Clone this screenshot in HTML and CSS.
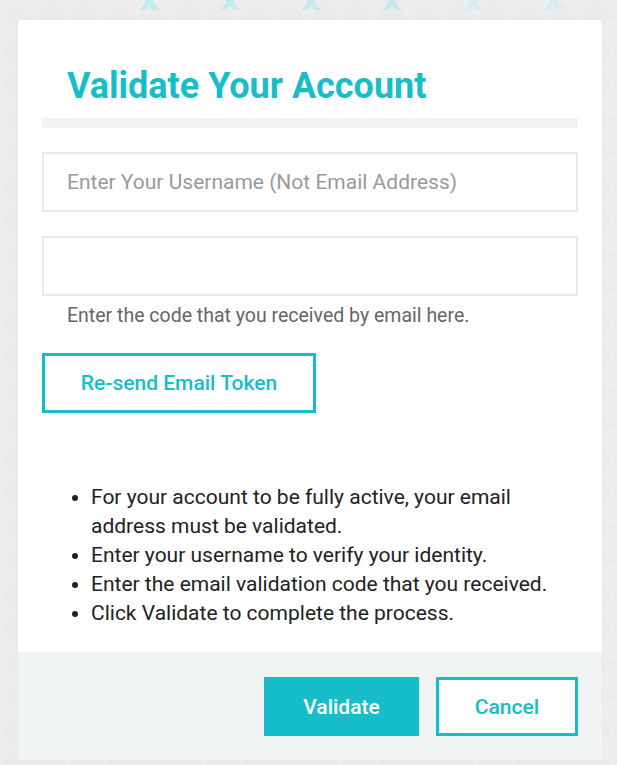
FILE: index.html
```html
<!DOCTYPE html>
<html lang="en">
<head>
<meta charset="utf-8">
<title>Validate Your Account</title>
<link rel="stylesheet" href="styles.css">
</head>
<body>
<div class="deco">
  <svg class="mark" viewBox="0 0 22 10" width="22" height="10"><path d="M1 -10 L21 14 M21 -10 L1 14"/></svg>
  <svg class="mark" viewBox="0 0 22 10" width="22" height="10"><path d="M1 -10 L21 14 M21 -10 L1 14"/></svg>
  <svg class="mark" viewBox="0 0 22 10" width="22" height="10"><path d="M1 -10 L21 14 M21 -10 L1 14"/></svg>
  <svg class="mark" viewBox="0 0 22 10" width="22" height="10"><path d="M1 -10 L21 14 M21 -10 L1 14"/></svg>
  <svg class="mark faint" viewBox="0 0 22 10" width="22" height="10"><path d="M1 -10 L21 14 M21 -10 L1 14"/></svg>
  <svg class="mark faint" viewBox="0 0 22 10" width="22" height="10"><path d="M1 -10 L21 14 M21 -10 L1 14"/></svg>
</div>
<div class="card">
  <div class="card-body">
    <h1 class="title">Validate Your Account</h1>
    <div class="divider"></div>
    <input class="field" type="text" placeholder="Enter Your Username (Not Email Address)">
    <input class="field field-code" type="text">
    <p class="help">Enter the code that you received by email here.</p>
    <button class="btn btn-outline btn-resend" type="button">Re-send Email Token</button>
    <ul class="info">
      <li>For your account to be fully active, your email address must be validated.</li>
      <li>Enter your username to verify your identity.</li>
      <li>Enter the email validation code that you received.</li>
      <li>Click Validate to complete the process.</li>
    </ul>
  </div>
  <div class="card-footer">
    <button class="btn btn-solid btn-validate" type="button">Validate</button>
    <button class="btn btn-outline btn-cancel" type="button">Cancel</button>
  </div>
</div>
</body>
</html>
```
FILE: styles.css
```css
html, body {
  margin: 0;
  padding: 0;
}
body {
  width: 617px;
  height: 765px;
  overflow: hidden;
  font-family: Roboto, "Liberation Sans", Arial, sans-serif;
  background-color: #ebebeb;
  background-image:
    linear-gradient(45deg, rgba(255,255,255,0.14) 25%, transparent 25%, transparent 75%, rgba(255,255,255,0.14) 75%),
    linear-gradient(-45deg, rgba(255,255,255,0.14) 25%, transparent 25%, transparent 75%, rgba(255,255,255,0.14) 75%);
  background-size: 34px 34px;
}
.deco {
  height: 20px;
  display: flex;
  align-items: flex-start;
  gap: 59px;
  padding-left: 138px;
  box-sizing: border-box;
}
.mark {
  display: block;
  overflow: hidden;
}
.mark path {
  stroke: #c4eaed;
  stroke-width: 5;
  fill: none;
}
.mark.faint path {
  stroke: #d9ecec;
}
.card {
  margin-left: 18px;
  width: 584px;
  background: #fff;
  border-radius: 3px 3px 0 0;
  box-shadow: 0 0 2px rgba(0,0,0,0.06);
}
.card-body {
  padding: 46px 24px 24px 24px;
}
.title {
  margin: 0 0 12px 0;
  padding-left: 25px;
  font-size: 36px;
  line-height: 40px;
  font-weight: 700;
  color: #17bdc8;
}
.divider {
  height: 10px;
  background: #f3f3f3;
  margin-bottom: 24px;
}
.field {
  display: block;
  width: 100%;
  height: 60px;
  box-sizing: border-box;
  border: 2px solid #e3ecec;
  padding: 0 0 0 23px;
  margin: 0;
  font-family: Roboto, "Liberation Sans", Arial, sans-serif;
  font-size: 21px;
  color: #333;
  background: #fff;
  outline: none;
}
.field::placeholder {
  color: #9a9a9a;
}
.field-code {
  margin-top: 24px;
}
.help {
  margin: 9px 0 0 0;
  padding-left: 25px;
  font-size: 19.5px;
  line-height: 22px;
  color: #666;
}
.btn {
  font-family: Roboto, "Liberation Sans", Arial, sans-serif;
  font-weight: 500;
  font-size: 21px;
  box-sizing: border-box;
  cursor: pointer;
  margin: 0;
}
.btn-outline {
  background: #fff;
  border: 3px solid #17bdc8;
  color: #17bdc8;
}
.btn-solid {
  background: #17bec9;
  border: 0;
  color: #fff;
}
.btn-resend {
  display: block;
  margin-top: 26px;
  width: 274px;
  height: 60px;
}
.info {
  margin: 70px 0 0 0;
  padding-left: 49px;
  font-size: 21px;
  line-height: 29px;
  color: #222;
}
.card-footer {
  background: #f1f4f5;
  display: flex;
  justify-content: flex-end;
  gap: 17px;
  padding: 25px 24px 24px 24px;
}
.btn-validate {
  width: 155px;
  height: 59px;
}
.btn-cancel {
  width: 142px;
  height: 59px;
}
```
